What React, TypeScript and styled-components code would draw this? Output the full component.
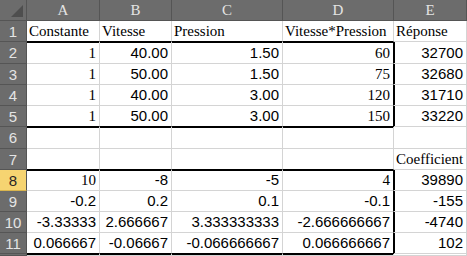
import React from "react";
import styled, { createGlobalStyle } from "styled-components";

type Value = { v: string; serif?: boolean; text?: boolean };

const GlobalStyle = createGlobalStyle`
	html, body {
		margin: 0;
		padding: 0;
		background: #ffffff;
		overflow: hidden;
	}
`;

const columns = ["A", "B", "C", "D", "E"];
const rowHeights = [21, 21, 22, 21, 21, 21, 22, 21, 21, 21, 21, 21];

const t = (v: string): Value => ({ v, text: true, serif: true });
const s = (v: string): Value => ({ v, serif: true });
const n = (v: string): Value => ({ v });
const e: Value = { v: "" };

const rows: Value[][] = [
	[t("Constante"), t("Vitesse"), t("Pression"), t("Vitesse*Pression"), t("Réponse")],
	[s("1"), n("40.00"), n("1.50"), s("60"), n("32700")],
	[s("1"), n("50.00"), n("1.50"), s("75"), n("32680")],
	[s("1"), n("40.00"), n("3.00"), s("120"), n("31710")],
	[s("1"), n("50.00"), n("3.00"), s("150"), n("33220")],
	[e, e, e, e, e],
	[e, e, e, e, t("Coefficient")],
	[s("10"), n("-8"), n("-5"), s("4"), n("39890")],
	[n("-0.2"), n("0.2"), n("0.1"), n("-0.1"), n("-155")],
	[n("-3.33333"), n("2.666667"), n("3.333333333"), n("-2.666666667"), n("-4740")],
	[n("0.066667"), n("-0.06667"), n("-0.066666667"), n("0.066666667"), n("102")],
	[e, e, e, e, e],
];

// thick boxes, rows 1-based, columns 0-based
const boxes = [
	{ r1: 2, r2: 5, c1: 0, c2: 3 },
	{ r1: 8, r2: 11, c1: 0, c2: 3 },
];

const Sheet = styled.div`
	display: grid;
	grid-template-columns: 27px 73px 72px 111px 111px 1fr;
	grid-template-rows: ${rowHeights.map((h) => `${h}px`).join(" ")};
	width: 467px;
	height: 256px;
	overflow: hidden;
`;

const Corner = styled.div`
	position: relative;
	background: #6c6c6c;
	border-right: 1px solid #555555;
	border-bottom: 1px solid #555555;
`;

const CornerMark = styled.svg`
	position: absolute;
	right: 3px;
	bottom: 3px;
`;

const ColHeader = styled.div`
	display: flex;
	align-items: center;
	justify-content: center;
	background: #6c6c6c;
	color: #e4e4e4;
	border-right: 1px solid #555555;
	border-bottom: 1px solid #555555;
	font-family: "Liberation Serif", serif;
	font-size: 15px;
`;

const RowHeader = styled.div<{ $active: boolean }>`
	display: flex;
	align-items: center;
	justify-content: center;
	background: ${(p) => (p.$active ? "#f6d471" : "#6c6c6c")};
	color: ${(p) => (p.$active ? "#262626" : "#e4e4e4")};
	border-right: 1px solid #555555;
	border-bottom: 1px solid ${(p) => (p.$active ? "#d9b54e" : "#555555")};
	font-family: "Liberation Sans", sans-serif;
	font-size: 15px;
`;

const Cell = styled.div<{
	$text: boolean;
	$serif: boolean;
	$bottom: boolean;
	$right: boolean;
	$top: boolean;
	$left: boolean;
}>`
	display: flex;
	align-items: flex-end;
	justify-content: ${(p) => (p.$text ? "flex-start" : "flex-end")};
	padding: 0 ${(p) => (p.$text ? "0" : "3px")} 1px ${(p) => (p.$text ? "2px" : "0")};
	box-sizing: border-box;
	min-width: 0;
	white-space: nowrap;
	overflow: visible;
	border-right: 1px solid ${(p) => (p.$right ? "#000000" : "#d4d4d4")};
	border-bottom: 1px solid ${(p) => (p.$bottom ? "#000000" : "#d4d4d4")};
	box-shadow: ${(p) =>
		[p.$top ? "inset 0 1px #000000" : "", p.$left ? "inset 1px 0 #000000" : ""]
			.filter(Boolean)
			.join(", ") || "none"};
	color: #000000;
	font-family: ${(p) => (p.$serif ? '"Liberation Serif", serif' : '"Liberation Sans", sans-serif')};
	font-size: 15px;
	line-height: 18px;
`;

const inCols = (c: number, b: { c1: number; c2: number }) => c >= b.c1 && c <= b.c2;
const inRows = (r: number, b: { r1: number; r2: number }) => r >= b.r1 && r <= b.r2;

const App: React.FC = () => {
	return (
		<>
			<GlobalStyle />
			<Sheet>
				<Corner>
					<CornerMark width="12" height="12" viewBox="0 0 12 12">
						<polygon points="12,0 12,12 0,12" fill="#4e4e4e" />
					</CornerMark>
				</Corner>
				{columns.map((c) => (
					<ColHeader key={c}>{c}</ColHeader>
				))}
				{rows.map((row, i) => {
					const r = i + 1;
					// the last row only peeks in at the bottom edge, its number is out of view
					const label = r <= 11 ? r : "";
					return (
						<React.Fragment key={r}>
							<RowHeader $active={r === 8}>{label}</RowHeader>
							{row.map((cell, c) => {
								const bottom = boxes.some((b) => inCols(c, b) && (r === b.r1 - 1 || r === b.r2));
								const top = boxes.some((b) => inCols(c, b) && (r === b.r1 || r === b.r2 + 1));
								const right = boxes.some((b) => inRows(r, b) && c === b.c2);
								const left = boxes.some((b) => inRows(r, b) && c === b.c2 + 1);
								return (
									<Cell
										key={c}
										$text={!!cell.text}
										$serif={!!cell.serif}
										$bottom={bottom}
										$top={top}
										$right={right}
										$left={left}
									>
										{cell.v}
									</Cell>
								);
							})}
						</React.Fragment>
					);
				})}
			</Sheet>
		</>
	);
};

export default App;
